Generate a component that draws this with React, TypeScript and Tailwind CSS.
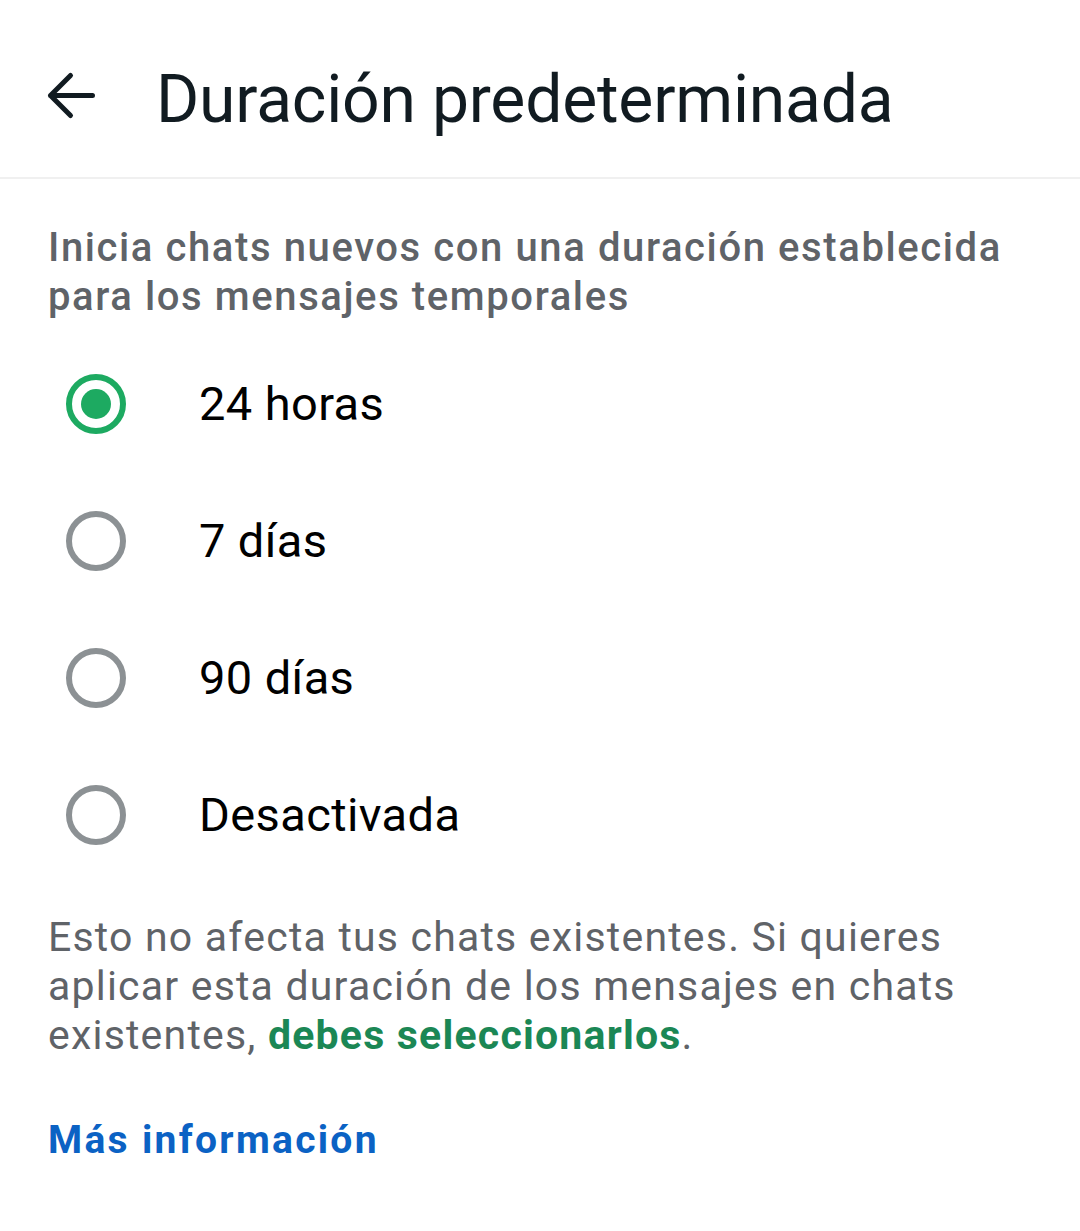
import { useState } from "react";

const options = ["24 horas", "7 días", "90 días", "Desactivada"];

function Radio({ checked }: { checked: boolean }) {
  return (
    <span
      className={`flex h-[60px] w-[60px] shrink-0 items-center justify-center rounded-full border-[6px] ${
        checked ? "border-[#1daa61]" : "border-[#8c9194]"
      }`}
    >
      {checked && <span className="h-[30px] w-[30px] rounded-full bg-[#1daa61]" />}
    </span>
  );
}

export default function App() {
  const [selected, setSelected] = useState(0);

  return (
    <div className="min-h-[1231px] w-[1080px] bg-white font-['Roboto',sans-serif] text-[#111b21]">
      <header className="flex h-[179px] items-center border-b-2 border-[#f0f0f0] pt-[23px]">
        <button className="mb-[8px] ml-[46px] flex h-[50px] w-[52px] items-center justify-center">
          <svg width="52" height="50" viewBox="0 0 52 50" fill="none">
            <path
              d="M46.5 24.5H4.5M24.5 4.5 4.5 24.5l20 20"
              stroke="#111b21"
              strokeWidth="5"
              strokeLinecap="round"
              strokeLinejoin="round"
            />
          </svg>
        </button>
        <h1 className="ml-[58px] text-[66px] leading-none tracking-[-0.2px]">Duración predeterminada</h1>
      </header>

      <p className="px-[48px] pt-[44px] text-[40px] font-medium leading-[49px] tracking-[1.6px] text-[#5f6368]">
        Inicia chats nuevos con una duración establecida para los mensajes temporales
      </p>

      <div className="mt-[14px]">
        {options.map((label, i) => (
          <button
            key={label}
            onClick={() => setSelected(i)}
            className="flex h-[137px] w-full items-center pl-[66px] text-left"
          >
            <Radio checked={selected === i} />
            <span className="ml-[73px] text-[47px] leading-none tracking-[0.4px] text-black">{label}</span>
          </button>
        ))}
      </div>

      <p className="mt-[30px] px-[48px] text-[41px] leading-[49px] tracking-[1.2px] text-[#5f6368]">
        Esto no afecta tus chats existentes. Si quieres aplicar esta duración de los mensajes en chats
        existentes, <span className="font-bold text-[#1b8755]">debes seleccionarlos</span>.
      </p>

      <a className="mt-[56px] block px-[48px] text-[39px] font-bold leading-[49px] tracking-[2.3px] text-[#0b62c4]">
        Más información
      </a>
    </div>
  );
}
